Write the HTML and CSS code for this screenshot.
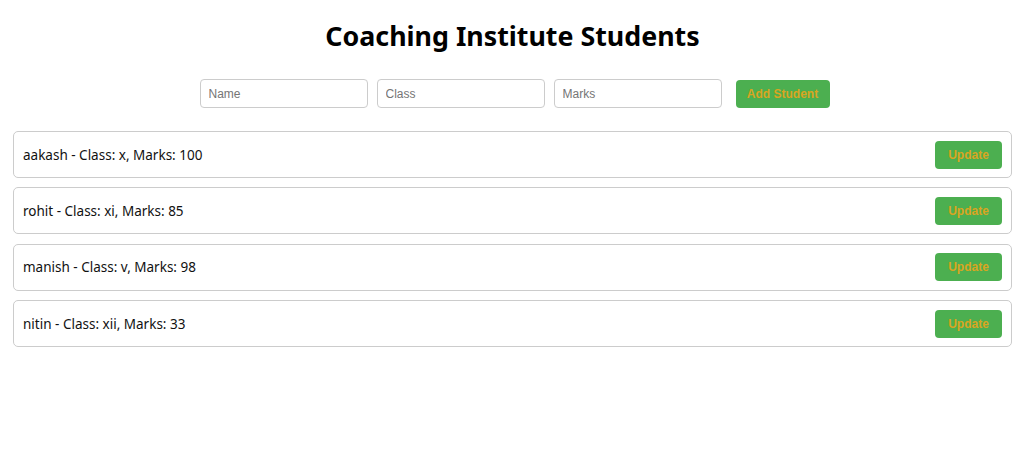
FILE: index.html
```html
<!DOCTYPE html>
<html>
<head>
<meta charset="utf-8">
<link rel="stylesheet" href="styles.css">
</head>
<body>
<div class="app">
  <h1 class="title">Coaching Institute Students</h1>
  <div class="form">
    <input class="field" type="text" placeholder="Name">
    <input class="field" type="text" placeholder="Class">
    <input class="field" type="text" placeholder="Marks">
    <button class="btn btn-add">Add Student</button>
  </div>
  <ul class="list">
    <li class="card"><span class="info">aakash - Class: x, Marks: 100</span><button class="btn btn-update">Update</button></li>
    <li class="card"><span class="info">rohit - Class: xi, Marks: 85</span><button class="btn btn-update">Update</button></li>
    <li class="card"><span class="info">manish - Class: v, Marks: 98</span><button class="btn btn-update">Update</button></li>
    <li class="card"><span class="info">nitin - Class: xii, Marks: 33</span><button class="btn btn-update">Update</button></li>
  </ul>
</div>
</body>
</html>
```
FILE: styles.css
```css
html, body {
  margin: 0;
  padding: 0;
  background: #fff;
}
body {
  font-family: "Noto Sans", "Open Sans", sans-serif;
  color: #111;
}
.app {
  padding: 0 13px;
}
.title {
  margin: 0;
  padding-top: 16px;
  height: 46px;
  font-size: 26.8px;
  font-weight: 700;
  text-align: center;
  line-height: 40px;
  color: #000;
}
.form {
  display: flex;
  justify-content: center;
  align-items: center;
  gap: 9px;
  margin-top: 17px;
  padding-left: 4px;
}
.field {
  width: 168px;
  height: 29px;
  box-sizing: border-box;
  border: 1px solid #ccc;
  border-radius: 4px;
  padding: 0 8px;
  font-family: "Liberation Sans", Arial, sans-serif;
  font-size: 12px;
  color: #333;
  outline: none;
}
.field::placeholder {
  color: #757575;
}
.btn {
  background: #4caf50;
  color: #d9a521;
  border: none;
  border-radius: 4px;
  font-family: "Liberation Sans", Arial, sans-serif;
  font-size: 12px;
  font-weight: 700;
  cursor: pointer;
  padding: 0;
}
.btn-add {
  width: 94px;
  height: 28px;
  margin-left: 5px;
}
.list {
  list-style: none;
  margin: 23px 0 0;
  padding: 0;
  display: flex;
  flex-direction: column;
  gap: 9.4px;
}
.card {
  display: flex;
  justify-content: space-between;
  align-items: center;
  height: 47px;
  box-sizing: border-box;
  border: 1px solid #ccc;
  border-radius: 5px;
  padding: 0 9px 0 9px;
}
.info {
  font-size: 13.5px;
  color: #111;
}
.btn-update {
  width: 67px;
  height: 28px;
}
```
